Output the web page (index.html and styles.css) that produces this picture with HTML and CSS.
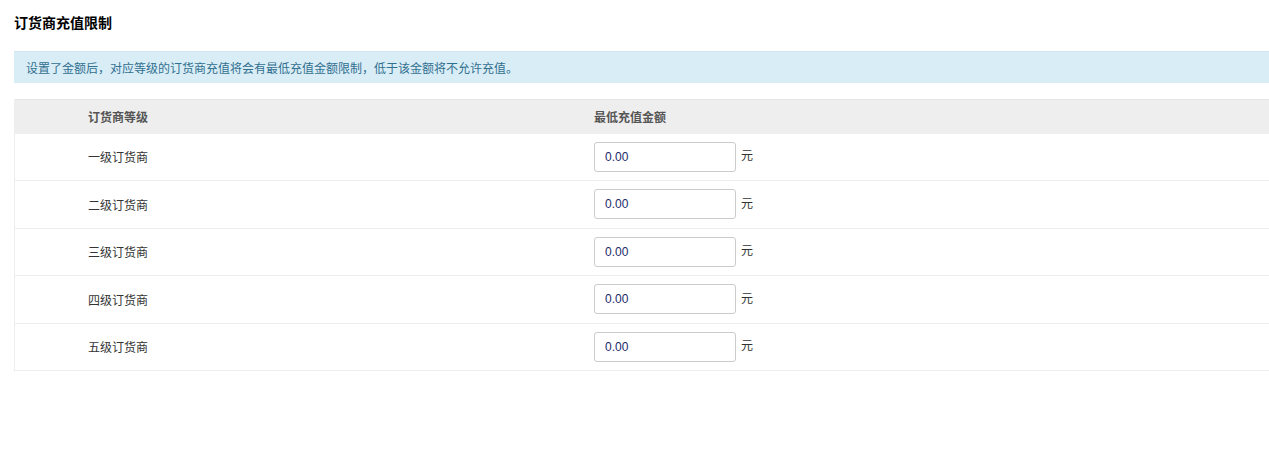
FILE: index.html
```html
<!DOCTYPE html>
<html lang="zh">
<head>
<meta charset="utf-8">
<link rel="stylesheet" href="styles.css">
</head>
<body>
<div class="page">
  <h3 class="title">订货商充值限制</h3>
  <div class="alert">设置了金额后，对应等级的订货商充值将会有最低充值金额限制，低于该金额将不允许充值。</div>
  <div class="table">
    <div class="row head">
      <div class="c1">订货商等级</div>
      <div class="c2">最低充值金额</div>
    </div>
    <div class="row">
      <div class="c1">一级订货商</div>
      <div class="c2"><input class="amt" type="text" value="0.00"><span class="unit">元</span></div>
    </div>
    <div class="row">
      <div class="c1">二级订货商</div>
      <div class="c2"><input class="amt" type="text" value="0.00"><span class="unit">元</span></div>
    </div>
    <div class="row">
      <div class="c1">三级订货商</div>
      <div class="c2"><input class="amt" type="text" value="0.00"><span class="unit">元</span></div>
    </div>
    <div class="row">
      <div class="c1">四级订货商</div>
      <div class="c2"><input class="amt" type="text" value="0.00"><span class="unit">元</span></div>
    </div>
    <div class="row">
      <div class="c1">五级订货商</div>
      <div class="c2"><input class="amt" type="text" value="0.00"><span class="unit">元</span></div>
    </div>
  </div>
</div>
</body>
</html>
```
FILE: styles.css
```css
html, body {
  margin: 0;
  padding: 0;
  background: #fff;
  overflow: hidden;
}
body {
  font-family: "Microsoft YaHei", "Noto Sans CJK SC", "Liberation Sans", sans-serif;
  font-size: 12px;
  color: #333;
}
.page {
  padding: 0 0 0 14px;
  width: 1275px;
}
.title {
  margin: 0;
  padding-top: 13px;
  height: 51px;
  box-sizing: border-box;
  font-size: 14px;
  font-weight: bold;
  line-height: 18px;
  color: #000;
}
.alert {
  background: #d9edf7;
  border-top: 1px solid #cfe6f2;
  color: #31708f;
  height: 32px;
  box-sizing: border-box;
  padding: 0 12px;
  line-height: 31px;
  font-size: 12px;
  margin-bottom: 16px;
}
.table {
  border-left: 1px solid #eee;
}
.row {
  display: flex;
  align-items: center;
  height: 47.5px;
  border-bottom: 1px solid #eee;
  box-sizing: border-box;
}
.row.head {
  background: #eee;
  height: 34.5px;
  border-top: 1px solid #e6e6e6;
  border-bottom: none;
  font-weight: bold;
  color: #555;
}
.c1 {
  width: 506px;
  padding-left: 73px;
}
.c2 {
  display: flex;
  align-items: center;
}
.amt {
  width: 142px;
  height: 30px;
  box-sizing: border-box;
  border: 1px solid #ccc;
  border-radius: 3px;
  padding: 0 10px;
  font-family: "Liberation Sans", Arial, sans-serif;
  font-size: 12px;
  color: #1a2a6a;
  outline: none;
}
.unit {
  margin-left: 5px;
  line-height: 14px;
  margin-top: -3px;
  color: #333;
}
```
